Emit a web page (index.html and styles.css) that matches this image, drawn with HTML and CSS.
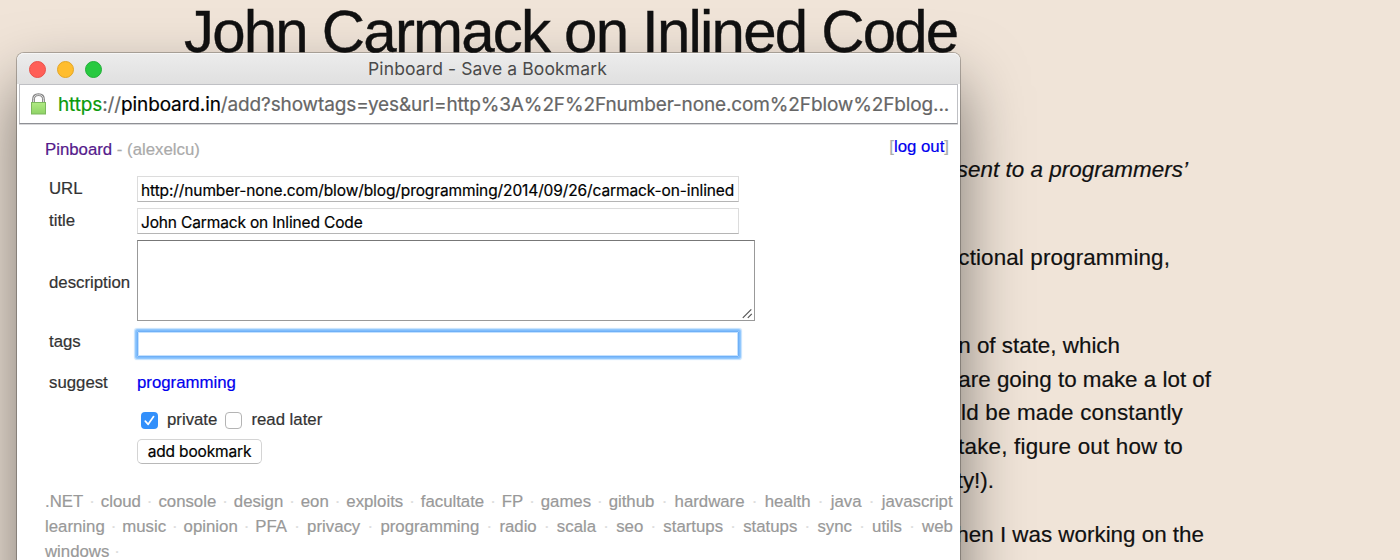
FILE: index.html
```html
<!DOCTYPE html>
<html lang="en">
<head>
<meta charset="utf-8">
<title>John Carmack on Inlined Code</title>
<link rel="stylesheet" href="styles.css">
</head>
<body>
<article class="article">
  <h1 class="headline">John Carmack on Inlined Code</h1>
  <div class="prose">
    <p class="para lead"><span class="line l1">sent to a programmers’</span></p>
    <p class="para"><span class="line l2">ctional programming,</span></p>
    <p class="para">
      <span class="line l3">n of state, which</span>
      <span class="line l4">are going to make a lot of</span>
      <span class="line l5">uld be made constantly</span>
      <span class="line l6">take, figure out how to</span>
      <span class="line l7">ty!).</span>
    </p>
    <p class="para">
      <span class="line l8">hen I was working on the</span>
      <span class="line l9">done for really</span>
    </p>
  </div>
</article>

<section class="window">
  <header class="titlebar">
    <span class="lights"><i class="light close"></i><i class="light minimize"></i><i class="light zoom"></i></span>
    <span class="window-title">Pinboard - Save a Bookmark</span>
  </header>
  <div class="address">
    <svg class="lock" width="18" height="22" viewBox="0 0 18 22">
      <defs><linearGradient id="lockBody" x1="0" y1="0" x2="0" y2="1"><stop offset="0" stop-color="#b0ea83"/><stop offset="1" stop-color="#8fd366"/></linearGradient></defs>
      <path d="M3.500 10V6.500C3.500 3.400 5.500 1.700 8.500 1.700S13.500 3.400 13.500 6.500V10" fill="none" stroke="#858585" stroke-width="2.800"/>
      <path d="M3.500 10V6.500C3.500 3.400 5.500 1.700 8.500 1.700S13.500 3.400 13.500 6.500V10" fill="none" stroke="#dedede" stroke-width="1"/>
      <rect x="1.500" y="9.500" width="14" height="11.500" fill="url(#lockBody)" stroke="#7db85e"/>
    </svg>
    <span class="url"><span class="scheme">https</span>://<span class="host">pinboard.in</span>/add?showtags=yes&amp;url=http%3A%2F%2Fnumber-none.com%2Fblow%2Fblog...</span>
  </div>
  <div class="content">
    <div class="account">
      <span class="muted"><a class="visited">Pinboard</a> - (alexelcu)</span>
      <span class="muted logout">[<a class="link">log out</a>]</span>
    </div>
    <form class="form">
      <label class="label r-url">URL</label>
      <div class="field"><span class="input-text t-url">http://number-none.com/blow/blog/programming/2014/09/26/carmack-on-inlined</span></div>
      <label class="label r-title">title</label>
      <div class="field"><span class="input-text t-title">John Carmack on Inlined Code</span></div>
      <label class="label r-desc">description</label>
      <div class="textarea">
        <svg class="grip" width="12" height="12" viewBox="0 0 12 12"><path d="M.8 9.800 9.300 1.300M5.800 9.800 9.800 5.800" fill="none" stroke="#555" stroke-width="1.200"/></svg>
      </div>
      <label class="label">tags</label>
      <div class="field focused"></div>
      <label class="label">suggest</label>
      <a class="link suggestion">programming</a>
      <div class="options">
        <span class="checkbox checked"><svg width="17" height="17" viewBox="0 0 17 17"><path d="M4.300 9.200 7.200 12.300 12.600 4.600" fill="none" stroke="#fff" stroke-width="1.700" stroke-linecap="round" stroke-linejoin="round"/></svg></span>
        <span class="option-label private">private</span>
        <span class="checkbox"></span>
        <span class="option-label">read later</span>
      </div>
      <button class="submit" type="button">add bookmark</button>
    </form>
    <div class="tags">
      <div class="tag-row first"><span>.NET</span><b>·</b><span>cloud</span><b>·</b><span>console</span><b>·</b><span>design</span><b>·</b><span>eon</span><b>·</b><span>exploits</span><b>·</b><span>facultate</span><b>·</b><span>FP</span><b>·</b><span>games</span><b>·</b><span>github</span><b>·</b><span>hardware</span><b>·</b><span>health</span><b>·</b><span>java</span><b>·</b><span>javascript</span></div>
      <div class="tag-row second"><span>learning</span><b>·</b><span>music</span><b>·</b><span>opinion</span><b>·</b><span>PFA</span><b>·</b><span>privacy</span><b>·</b><span>programming</span><b>·</b><span>radio</span><b>·</b><span>scala</span><b>·</b><span>seo</span><b>·</b><span>startups</span><b>·</b><span>statups</span><b>·</b><span>sync</span><b>·</b><span>utils</span><b>·</b><span>web</span></div>
      <div class="tag-row last"><span>windows</span><b>·</b></div>
    </div>
  </div>
</section>
</body>
</html>
```
FILE: styles.css
```css
* { box-sizing: border-box; }
html { height: 100%; overflow: hidden; }
body {
  margin: 0;
  height: 560px;
  overflow: hidden;
  position: relative;
  background: #f0e4d8;
  color: #111;
  font-family: "Liberation Sans", Arial, sans-serif;
}

/* Article behind the popup */
.article { height: 560px; overflow: hidden; }
.headline {
  margin: 0;
  padding: 0 0 0 184px;
  height: 153px;
  font-size: 60px;
  font-weight: 400;
  line-height: 63px;
  letter-spacing: -1.8px;
  white-space: nowrap;
  -webkit-text-stroke: .4px #111;
}
.prose { width: 1211px; font-size: 22.4px; line-height: 33.6px; -webkit-text-stroke: .2px #111; }
.para { margin: 0 0 54.4px; }
.para:nth-child(3) { margin-bottom: 21px; line-height: 33.7px; }
.lead { font-style: italic; }
.line { display: block; text-align: right; white-space: nowrap; }
.l1 { padding-right: 23px; letter-spacing: .05px; }
.l2 { padding-right: 41px; letter-spacing: .13px; }
.l3 { padding-right: 91px; }
.l5 { padding-right: 28px; letter-spacing: .2px; }
.l6 { padding-right: 28px; letter-spacing: .2px; }
.l7 { padding-right: 217px; }
.l8 { padding-right: 7px; }
.l9 { padding: 1px 102px 0 0; }

/* Popup window */
.window {
  position: absolute;
  left: 17px;
  top: 53px;
  width: 943px;
  height: 640px;
  background: #fff;
  border-radius: 7px;
  box-shadow: 0 0 0 1px rgba(0,0,0,.25), 0 32px 64px rgba(0,0,0,.5);
}
.titlebar {
  height: 31px;
  display: grid;
  grid-template-columns: 100px 1fr 100px;
  align-items: center;
  padding: 0 14px 0 12px;
  border-radius: 7px 7px 0 0;
  background: linear-gradient(#ececec, #e0e0e0);
  box-shadow: inset 0 1px #f6f6f6;
}
.lights { display: flex; gap: 11px; padding-top: 1px; }
.light { width: 17px; height: 17px; border-radius: 50%; }
.close { background: #ff5f57; border: 1px solid #e9514a; }
.minimize { background: #ffbd2e; border: 1px solid #e3a627; }
.zoom { background: #28c940; border: 1px solid #22b038; }
.window-title {
  font: 17.5px/31px Inter, sans-serif;
  letter-spacing: .12px;
  color: #4a4a4a;
  text-align: center;
  white-space: nowrap;
}
.address {
  height: 40px;
  margin: 0 2px;
  display: flex;
  align-items: center;
  gap: 10px;
  padding-left: 10px;
  border: 1px solid #bfc0c4;
  border-bottom-color: #8e9095;
  background: #fff;
  box-shadow: 0 1px #d8d8da;
}
.lock { flex: none; }
.url { font: 19px/38px Inter, sans-serif; letter-spacing: -.125px; color: #666; white-space: nowrap; padding-top: 2px; -webkit-text-stroke: .2px; }
.scheme { color: #0b9a0b; }
.host { color: #000; }

.content { font-size: 16.8px; color: #333; padding: 14px 7px 0 28px; -webkit-text-stroke: .2px; }
.account { display: flex; justify-content: space-between; line-height: 24px; }
.muted { color: #aaa; white-space: nowrap; }
.logout { padding-right: 4px; position: relative; top: -3px; }
.link { color: #0000ee; }
.visited { color: #551a8b; }

.form {
  display: grid;
  grid-template-columns: 88px 1fr;
  grid-template-rows: 32px 32px 91px 41px 38px 29px 28px;
  padding: 14px 0 0 4px;
}
.label { line-height: 22px; }
.r-url, .r-title { padding-top: 2px; }
.r-desc { padding-top: 32px; }
.field {
  width: 602px;
  height: 26px;
  border: 1px solid #dcdcdc;
  border-bottom-color: #b5b5b5;
  padding: 0 3px;
  white-space: nowrap;
}
.input-text { display: block; font: 15.5px/27px Inter, sans-serif; letter-spacing: -.15px; color: #000; }
.t-url { letter-spacing: -.11px; }
.textarea {
  width: 618px;
  height: 81px;
  border: 1px solid #999;
  border-top: 1px solid #777;
  display: flex;
  align-items: flex-end;
  justify-content: flex-end;
}
.field.focused { border-color: #6fb0f7; box-shadow: 0 0 0 1px #80bdfc, 0 0 0 2px #92c8fd, 0 0 1px 3px #c4e1fe, inset 0 0 0 1px #c4e1fe; border-radius: 1px; }
.suggestion { line-height: 22px; }
.options { grid-column: 2; display: flex; align-items: center; padding-left: 4px; height: 20px; }
.checkbox { width: 17px; height: 17px; border: 1px solid #b4b4b4; border-radius: 4px; background: #fff; }
.checked { border: 0; background: #3390fb; }
.checked svg { display: block; }
.option-label { padding-left: 9px; }
.private { padding-right: 8px; }
.submit {
  grid-column: 2;
  width: 125px;
  height: 25px;
  padding: 0;
  border: 1px solid #d4d4d4;
  border-bottom-color: #b8b8b8;
  border-radius: 5px;
  background: #fff;
  color: #000;
  font: 15.5px/23px Inter, sans-serif;
  letter-spacing: -.15px;
  white-space: nowrap;
}
.tags { color: #999; line-height: 25px; padding-top: 22px; }
.tag-row { display: flex; justify-content: space-between; white-space: nowrap; }
.tag-row b { font-weight: 400; color: #ddd; }
.tag-row.first b:nth-child(n+20) { padding: 0 1.35px; }
.tag-row.second b:nth-child(n+8) { padding: 0 1.3px; }
.tag-row.last { justify-content: flex-start; gap: 5px; }
```
